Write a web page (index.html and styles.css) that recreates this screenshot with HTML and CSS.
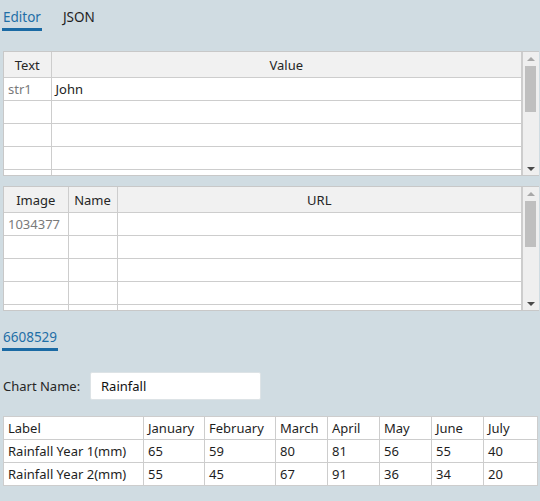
FILE: index.html
```
<!DOCTYPE html>
<html>
<head>
<meta charset="utf-8">
<link rel="stylesheet" href="styles.css">
</head>
<body>
<div class="tabs top-tabs">
  <span class="tab active">Editor</span>
  <span class="tab">JSON</span>
</div>

<div class="grid">
  <div class="grid-body">
    <table class="sheet">
      <colgroup><col style="width:47px"><col></colgroup>
      <tr class="head"><th>Text</th><th>Value</th></tr>
      <tr><td class="rowhead">str1</td><td>John</td></tr>
      <tr><td class="rowhead"></td><td></td></tr>
      <tr><td class="rowhead"></td><td></td></tr>
      <tr><td class="rowhead"></td><td></td></tr>
      <tr><td class="rowhead"></td><td></td></tr>
    </table>
  </div>
  <div class="vscroll">
    <span class="arrow up"></span>
    <span class="thumb"></span>
    <span class="arrow down"></span>
  </div>
</div>

<div class="grid second">
  <div class="grid-body">
    <table class="sheet">
      <colgroup><col style="width:64px"><col style="width:49px"><col></colgroup>
      <tr class="head"><th>Image</th><th>Name</th><th>URL</th></tr>
      <tr><td class="rowhead">1034377</td><td></td><td></td></tr>
      <tr><td class="rowhead"></td><td></td><td></td></tr>
      <tr><td class="rowhead"></td><td></td><td></td></tr>
      <tr><td class="rowhead"></td><td></td><td></td></tr>
      <tr><td class="rowhead"></td><td></td><td></td></tr>
    </table>
  </div>
  <div class="vscroll">
    <span class="arrow up"></span>
    <span class="thumb"></span>
    <span class="arrow down"></span>
  </div>
</div>

<div class="tabs chart-tabs">
  <span class="tab active">6608529</span>
</div>

<div class="name-row">
  <label class="name-label">Chart Name:</label>
  <div class="name-input">Rainfall</div>
</div>

<table class="data">
  <colgroup>
    <col style="width:140px"><col style="width:61px"><col style="width:71px"><col style="width:52px"><col style="width:52px"><col style="width:52px"><col style="width:52px"><col>
  </colgroup>
  <tr><td>Label</td><td>January</td><td>February</td><td>March</td><td>April</td><td>May</td><td>June</td><td>July</td></tr>
  <tr><td>Rainfall Year 1(mm)</td><td>65</td><td>59</td><td>80</td><td>81</td><td>56</td><td>55</td><td>40</td></tr>
  <tr><td>Rainfall Year 2(mm)</td><td>55</td><td>45</td><td>67</td><td>91</td><td>36</td><td>34</td><td>20</td></tr>
</table>
</body>
</html>
```

FILE: styles.css
```
html, body {
  margin: 0;
  padding: 0;
  background: #d0dce2;
}
body {
  font-family: "Noto Sans", "DejaVu Sans", sans-serif;
  font-size: 13px;
  color: #222;
  width: 540px;
  height: 501px;
  overflow: hidden;
}
.tabs {
  display: flex;
  gap: 20px;
  padding-left: 2px;
}
.top-tabs {
  height: 51px;
  padding-top: 8px;
  box-sizing: border-box;
}
.tab {
  display: block;
  height: 20px;
  line-height: 19px;
  padding: 0 1px;
  color: #1e1e1e;
  font-size: 13.5px;
}
.tab.active {
  color: #1f6fa7;
  border-bottom: 3px solid #1a6aa4;
}
.grid {
  margin-left: 3px;
  width: 536px;
  height: 125px;
  border: 1px solid #c8c8c8;
  border-right: 0;
  box-sizing: border-box;
  display: flex;
  background: #fff;
}
.grid.second {
  margin-top: 10px;
}
.grid-body {
  flex: 1;
  overflow: hidden;
}
.sheet {
  width: 100%;
  border-collapse: collapse;
  table-layout: fixed;
}
.sheet th, .sheet td {
  border-right: 1px solid #cdcdcd;
  border-bottom: 1px solid #cdcdcd;
  padding: 0 4px;
  height: 22px;
  white-space: nowrap;
  overflow: hidden;
  text-align: left;
}
.sheet tr.head th {
  background: #f1f1f1;
  height: 25px;
  font-weight: normal;
  text-align: center;
  color: #262626;
}
.sheet td.rowhead {
  color: #7a7a7a;
}
.vscroll {
  width: 16px;
  background: #efefef;
  border-left: 1px solid #cdcdcd;
  position: relative;
}
.thumb {
  position: absolute;
  left: 2px;
  top: 14px;
  width: 11px;
  height: 46px;
  background: #bfbfbf;
}
.arrow {
  position: absolute;
  left: 4px;
  width: 0;
  height: 0;
  border-left: 4px solid transparent;
  border-right: 4px solid transparent;
}
.arrow.up {
  top: 5px;
  border-bottom: 4px solid #a8a8a8;
}
.arrow.down {
  bottom: 4px;
  border-top: 4px solid #4a4a4a;
}
.chart-tabs {
  margin-top: 17px;
  height: 24px;
}
.name-row {
  display: flex;
  align-items: center;
  margin-top: 20px;
  padding-left: 3px;
}
.name-label {
  width: 87px;
  color: #262626;
}
.name-input {
  width: 171px;
  height: 28px;
  box-sizing: border-box;
  border: 1px solid #dde3e6;
  border-radius: 2px;
  background: #fff;
  line-height: 26px;
  padding-left: 10px;
  color: #111;
}
.data {
  margin-top: 16px;
  margin-left: 3px;
  width: 535px;
  border-collapse: collapse;
  table-layout: fixed;
  background: #fff;
}
.data td {
  border: 1px solid #cdcdcd;
  height: 22px;
  padding: 0 4px;
  white-space: nowrap;
  overflow: hidden;
  color: #1e1e1e;
}
```
